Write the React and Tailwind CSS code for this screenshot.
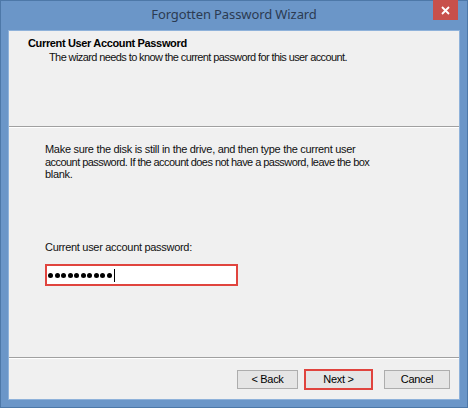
export default function App() {
  const dots = Array.from({ length: 10 });
  return (
    <div className="w-[468px] h-[408px] bg-[#6b96c8] flex flex-col border border-[#4d78a8] font-['Liberation_Sans',Arial,sans-serif] text-black">
      {/* Title bar */}
      <div className="relative h-[29px] flex items-center justify-center shrink-0">
        <span className="font-['Noto_Sans',sans-serif] text-[13px] text-[#2b3b52] tracking-[-0.1px] -mt-[1px]">
          Forgotten Password Wizard
        </span>
        <div className="absolute right-[9px] -top-px w-[25px] h-[20px] bg-[#c8504b] flex items-center justify-center">
          <svg width="9" height="9" viewBox="0 0 9 9">
            <path d="M1 1 L8 8 M8 1 L1 8" stroke="white" strokeWidth="1.8" />
          </svg>
        </div>
      </div>

      {/* Client area */}
      <div className="mx-[7px] mb-[7px] flex-1 bg-[#f0f0f0] flex flex-col border border-[#8fb2da]">
        {/* Header */}
        <div className="h-[95px] shrink-0 pt-[6px] pl-[19px] text-[11px] leading-[13px]">
          <div className="font-bold tracking-[-0.35px]">Current User Account Password</div>
          <div className="pl-[21px] mt-[1px] tracking-[-0.6px] text-[#111]">
            The wizard needs to know the current password for this user account.
          </div>
        </div>
        <div className="h-[2px] border-t border-[#a0a0a0] border-b border-b-white shrink-0" />

        {/* Body */}
        <div className="flex-1 pl-[36px] pt-[15px] text-[11px] leading-[12.5px] text-[#111] tracking-[-0.3px]">
          <p className="whitespace-nowrap">
            Make sure the disk is still in the drive, and then type the current user
            <br />
            <span className="tracking-[-0.55px]">
              account password. If the account does not have a password, leave the box
            </span>
            <br />
            blank.
          </p>
          <div className="mt-[60px]">Current user account password:</div>
          <div className="mt-[11px] w-[193px] h-[22px] border-2 border-[#e0443e] bg-white flex items-center pl-[1px]">
            <div className="flex items-center gap-[1.5px]">
              {dots.map((_, i) => (
                <span key={i} className="w-[5px] h-[5px] rounded-full bg-black" />
              ))}
            </div>
            <span className="ml-[2px] w-px h-[13px] bg-black" />
          </div>
        </div>

        <div className="h-[2px] border-t border-[#a0a0a0] border-b border-b-white shrink-0" />

        {/* Footer */}
        <div className="h-[40px] shrink-0 flex items-start justify-end pr-[9px] pt-[11px] text-[11px] tracking-[-0.3px]">
          <button className="w-[61px] h-[19px] border border-[#adadad] bg-[#e5e5e5] flex items-center justify-center">
            &lt; Back
          </button>
          <div className="ml-[6px] -mt-[1px] w-[69px] h-[21px] border-2 border-[#e0443e] bg-[#e5e5e5] flex items-center justify-center">
            Next &gt;
          </div>
          <button className="ml-[11px] w-[66px] h-[19px] border border-[#adadad] bg-[#e5e5e5] flex items-center justify-center">
            Cancel
          </button>
        </div>
      </div>
    </div>
  );
}
